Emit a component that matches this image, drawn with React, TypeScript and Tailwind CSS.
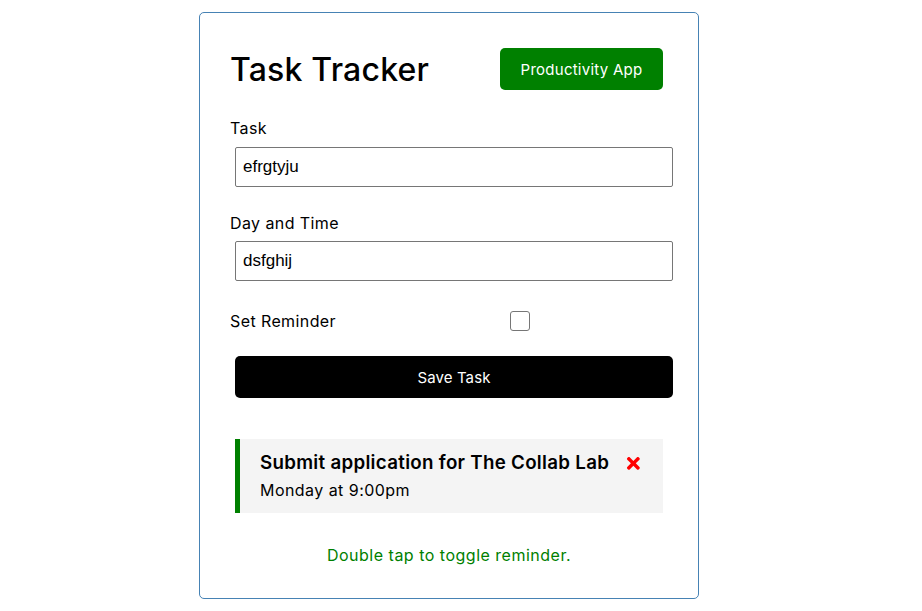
import { FaTimes } from 'react-icons/fa';

export default function App() {
  return (
    <div className="min-h-screen bg-white pt-[12px] font-['Inter',sans-serif] text-black">
      <div className="ml-[199px] w-[500px] h-[587px] border border-[#4682b4] rounded-[5px] p-[30px]">
        <header className="flex items-center justify-between h-[52px]">
          <h1 className="pt-[2px] text-[32px] font-medium leading-[48px] tracking-[0.2px]">Task Tracker</h1>
          <button className="mr-[5px] w-[163px] h-[42px] pt-[2px] rounded-[5px] bg-[#008000] text-white text-[15px] tracking-[0.25px]">
            Productivity App
          </button>
        </header>

        <form className="text-[16px] tracking-[0.4px]">
          <div className="mt-[20px]">
            <label className="block leading-[27px]">Task</label>
            <input
              value="efrgtyju"
              readOnly
              className="block mt-[5px] ml-[5px] w-[438px] h-[40px] px-[7px] border border-[#767676] rounded-[2px] font-['Liberation_Sans',Arial,sans-serif] text-[17px] tracking-normal outline-none"
            />
          </div>
          <div className="mt-[23px]">
            <label className="block leading-[27px]">Day and Time</label>
            <input
              value="dsfghij"
              readOnly
              className="block mt-[4px] ml-[5px] w-[438px] h-[40px] px-[7px] border border-[#767676] rounded-[2px] font-['Liberation_Sans',Arial,sans-serif] text-[17px] tracking-normal outline-none"
            />
          </div>
          <div className="mt-[25px] flex items-center h-[30px]">
            <label className="w-[280px]">Set Reminder</label>
            <span className="w-[20px] h-[20px] border border-[#767676] rounded-[3px]" />
          </div>
          <button
            type="button"
            className="block mt-[20px] ml-[5px] w-[438px] h-[42px] pt-[2px] rounded-[5px] bg-black text-white text-[15px] tracking-[0.1px]"
          >
            Save Task
          </button>
        </form>

        <div className="mt-[41px] ml-[5px] w-[428px] bg-[#f4f4f4] border-l-[5px] border-[#008000] pl-[20px] pr-[20px] pt-[10px] pb-[10px]">
          <h3 className="flex items-center justify-between text-[18.72px] font-semibold leading-[28px] tracking-[0.3px]">
            Submit application for The Collab Lab
            <FaTimes className="text-[#ff0000]" />
          </h3>
          <p className="text-[16px] leading-[26px] tracking-[0.45px]">Monday at 9:00pm</p>
        </div>

        <p className="mt-[30px] text-center text-[16px] leading-[24px] tracking-[0.5px] text-[#008000]">
          Double tap to toggle reminder.
        </p>
      </div>
    </div>
  );
}
